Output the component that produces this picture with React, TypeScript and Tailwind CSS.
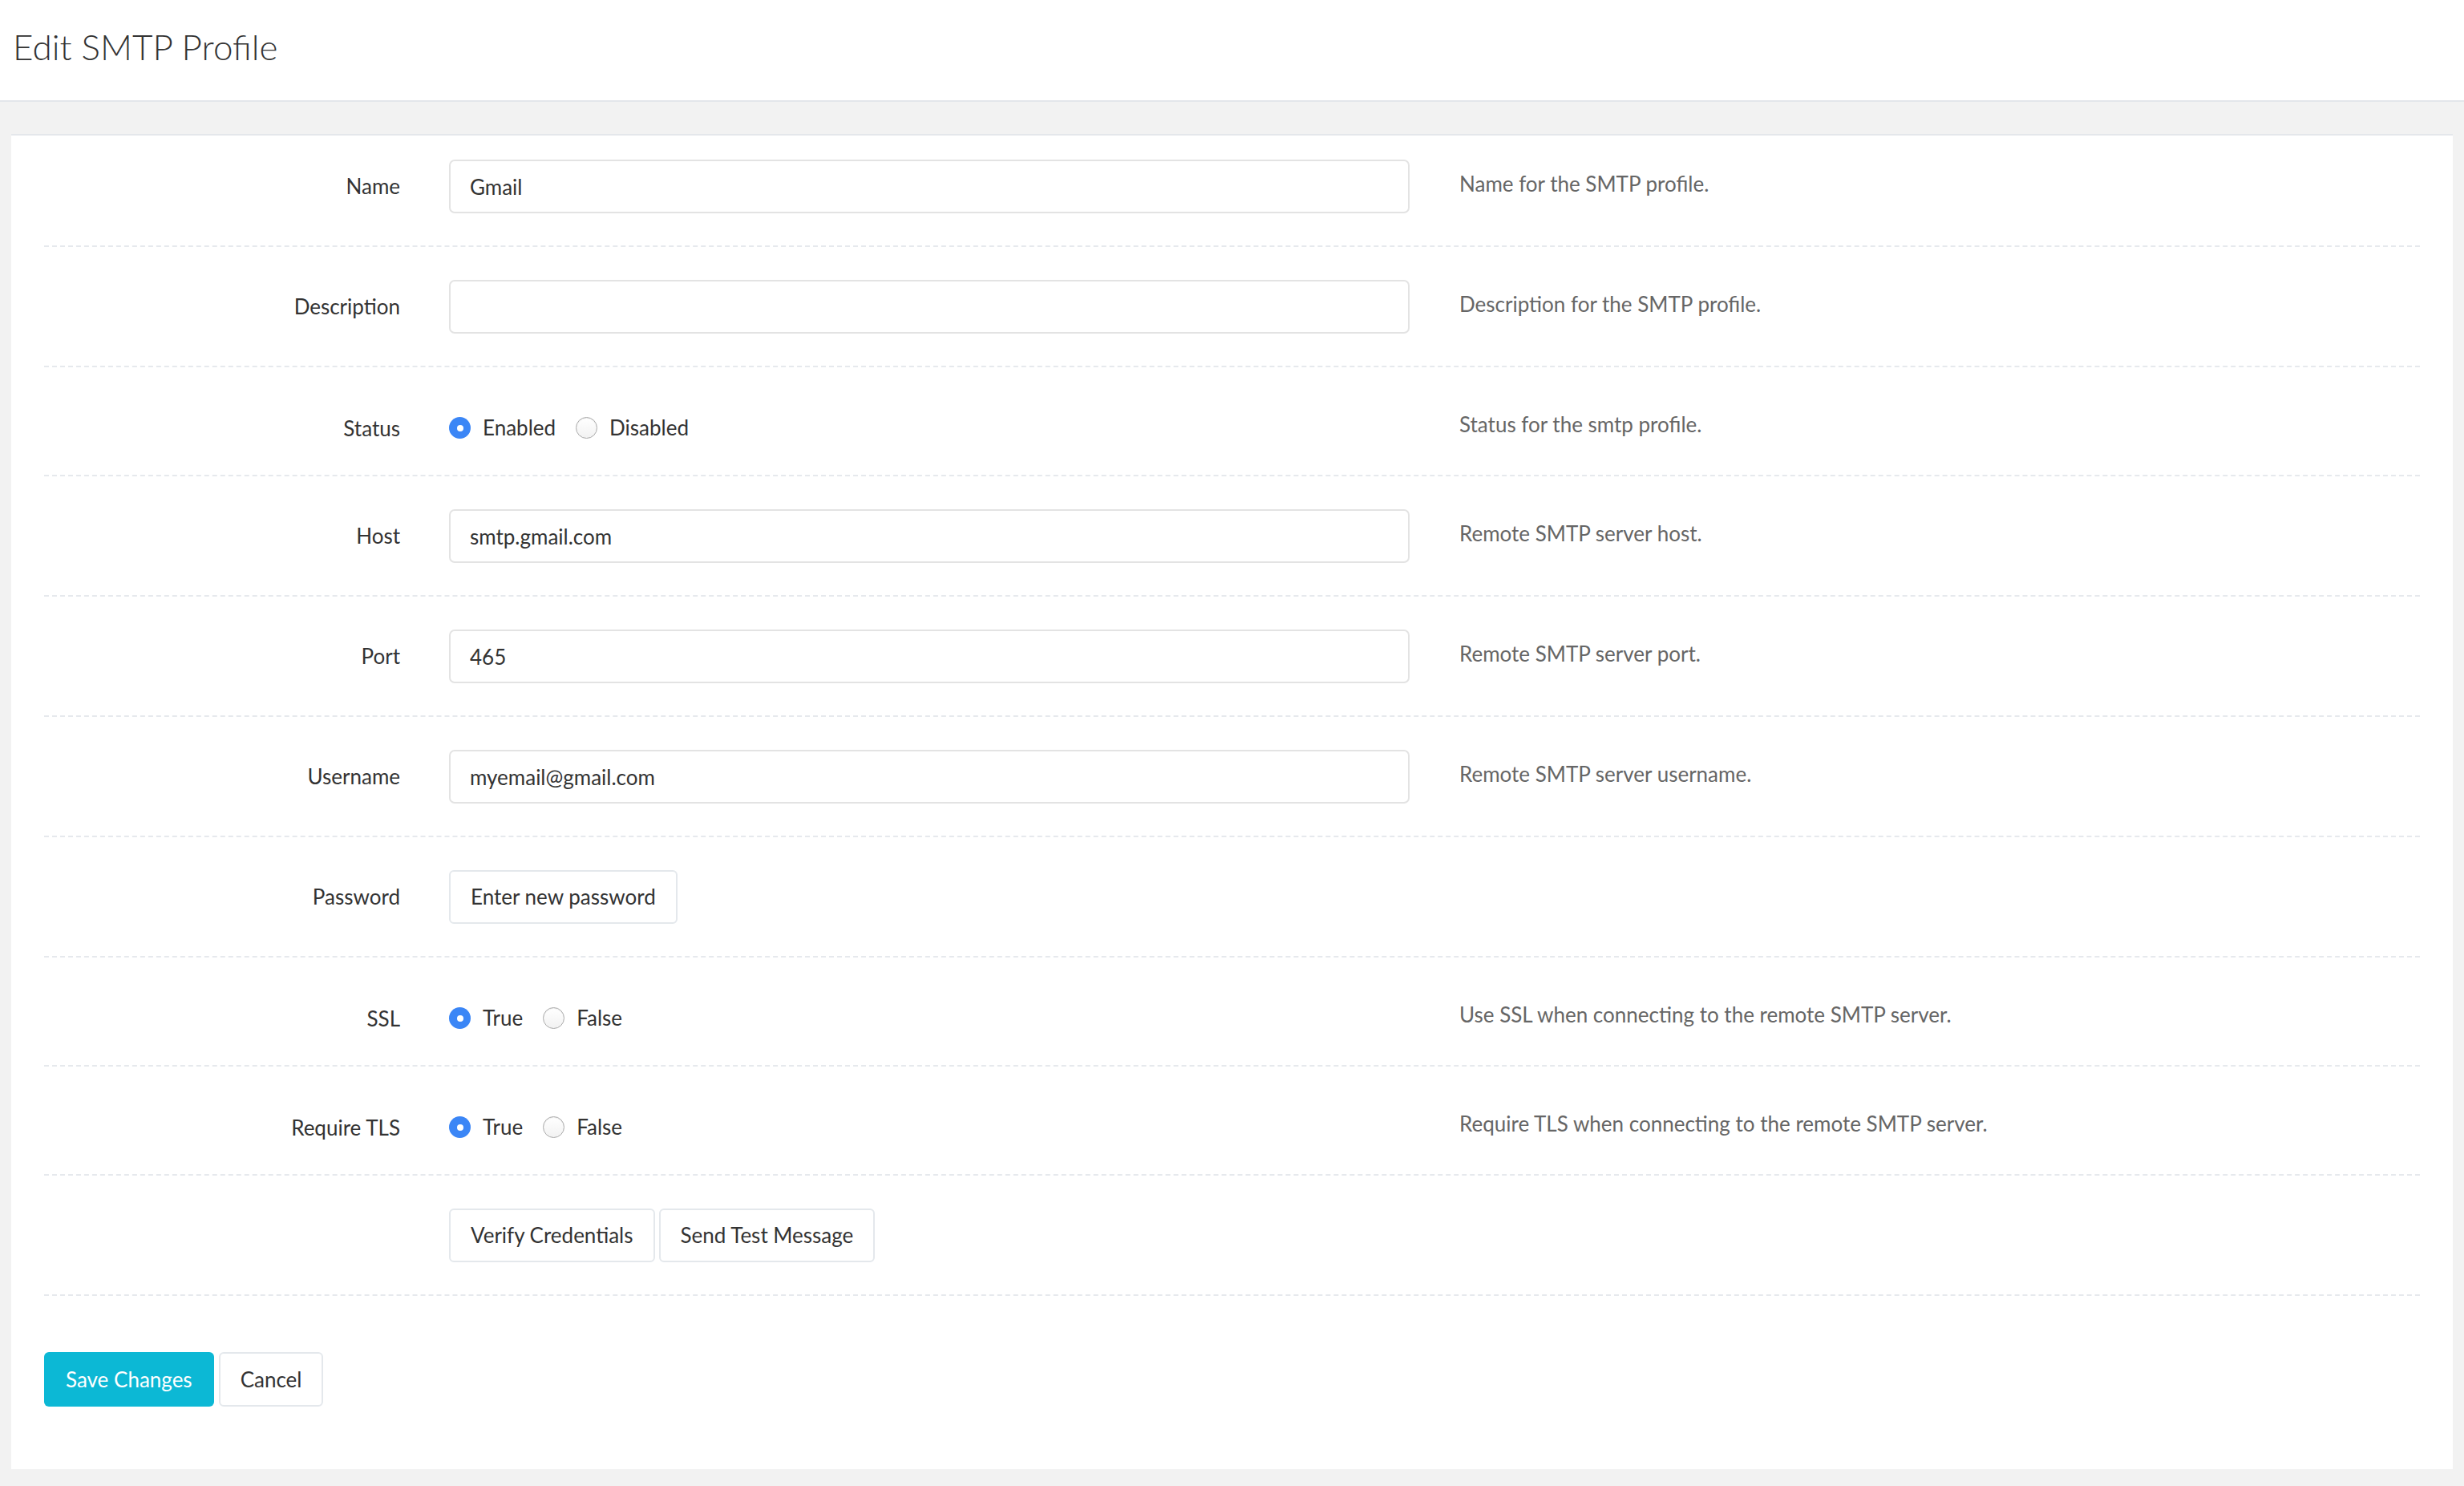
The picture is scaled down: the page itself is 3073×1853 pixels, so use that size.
import type { ReactNode } from "react";

type Field = {
  label: string;
  help?: string;
  kind: "input" | "radio" | "password" | "actions";
  value?: string;
  options?: string[];
};

const fields: Field[] = [
  { label: "Name", kind: "input", value: "Gmail", help: "Name for the SMTP profile." },
  { label: "Description", kind: "input", value: "", help: "Description for the SMTP profile." },
  { label: "Status", kind: "radio", options: ["Enabled", "Disabled"], help: "Status for the smtp profile." },
  { label: "Host", kind: "input", value: "smtp.gmail.com", help: "Remote SMTP server host." },
  { label: "Port", kind: "input", value: "465", help: "Remote SMTP server port." },
  { label: "Username", kind: "input", value: "myemail@gmail.com", help: "Remote SMTP server username." },
  { label: "Password", kind: "password" },
  { label: "SSL", kind: "radio", options: ["True", "False"], help: "Use SSL when connecting to the remote SMTP server." },
  { label: "Require TLS", kind: "radio", options: ["True", "False"], help: "Require TLS when connecting to the remote SMTP server." },
  { label: "", kind: "actions" },
];

function Radio({ checked }: { checked: boolean }) {
  return checked ? (
    <span className="flex size-[27px] shrink-0 items-center justify-center rounded-full bg-[#3b86f6]">
      <span className="size-[8px] rounded-full bg-white" />
    </span>
  ) : (
    <span className="size-[27px] shrink-0 rounded-full border-[1.5px] border-[#a9a9a9] bg-gradient-to-b from-white to-[#f2f2f2] shadow-[inset_0_1px_1px_rgba(0,0,0,0.08)]" />
  );
}

function GhostButton({ children }: { children: ReactNode }) {
  return (
    <button
      type="button"
      className="flex h-[67px] items-center whitespace-nowrap rounded-[6px] border-2 border-[#e4e8ec] bg-white px-[25px] text-[26px] text-[#333]"
    >
      {children}
    </button>
  );
}

function Row({ field, first }: { field: Field; first: boolean }) {
  const radio = field.kind === "radio";
  return (
    <div
      className={`flex items-start border-b-2 border-dashed border-[#e6e9ed] pb-[40px] ${
        first ? "pt-[30px]" : "pt-[41px]"
      }`}
    >
      <div
        className={`w-[444px] shrink-0 text-right text-[26px] leading-[24px] text-[#333] ${
          radio ? "pt-[23px]" : "pt-[21px]"
        }`}
      >
        {field.label}
      </div>
      <div className="ml-[61px] w-[1198px] shrink-0">
        {field.kind === "input" && (
          <input
            defaultValue={field.value}
            className="h-[67px] w-full rounded-[7px] border-2 border-[#e3e3e3] bg-white px-[24px] text-[26px] text-[#333] outline-none"
          />
        )}
        {radio && (
          <div className="flex h-[53px] items-start gap-[25px] pt-[21px]">
            {field.options!.map((opt, i) => (
              <label key={opt} className="flex items-center">
                <Radio checked={i === 0} />
                <span className="ml-[15px] text-[26px] leading-[27px] text-[#333]">{opt}</span>
              </label>
            ))}
          </div>
        )}
        {field.kind === "password" && (
          <div className="flex">
            <GhostButton>Enter new password</GhostButton>
          </div>
        )}
        {field.kind === "actions" && (
          <div className="flex gap-[5px]">
            <GhostButton>Verify Credentials</GhostButton>
            <GhostButton>Send Test Message</GhostButton>
          </div>
        )}
      </div>
      {field.help && (
        <div className="ml-[62px] pt-[16px] text-[26px] leading-[28px] text-[#666]">{field.help}</div>
      )}
    </div>
  );
}

export default function App() {
  return (
    <div className="min-h-screen bg-[#f2f2f2] font-['Lato',sans-serif]">
      <header className="h-[127px] border-b-2 border-[#e3e6ea] bg-white pl-[16px] pt-[32px]">
        <h1 className="text-[44px] font-light leading-[52px] text-[#333]">Edit SMTP Profile</h1>
      </header>

      <div className="mx-[14px] mt-[40px] border-t-2 border-[#e4e7eb] bg-white px-[41px]">
        {fields.map((f, i) => (
          <Row key={i} field={f} first={i === 0} />
        ))}

        <div className="flex gap-[6px] pb-[78px] pt-[70px]">
          <button
            type="button"
            className="h-[68px] rounded-[6px] bg-[#0cb8d5] px-[27px] text-[26px] text-white"
          >
            Save Changes
          </button>
          <button
            type="button"
            className="h-[68px] rounded-[6px] border-2 border-[#e4e8ec] bg-white px-[25px] text-[26px] text-[#333]"
          >
            Cancel
          </button>
        </div>
      </div>
      <div className="h-[17px]" />
    </div>
  );
}
